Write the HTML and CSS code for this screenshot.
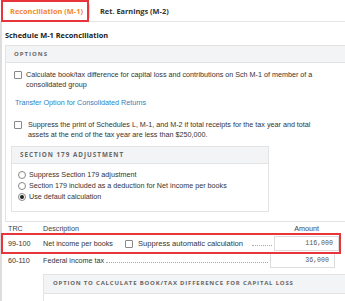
FILE: index.html
```html
<!DOCTYPE html>
<html lang="en">
<head>
  <meta charset="UTF-8" />
  <title>Schedule M-1 Reconciliation</title>
  <link rel="stylesheet" href="styles.css">
</head>
<body>
  <div class="tabs">
    <div class="tab active">Reconciliation (M-1)</div>
    <div class="tab-sep"></div>
    <div class="tab">Ret. Earnings (M-2)</div>
  </div>

  <div class="content">
    <h1>Schedule M-1 Reconciliation</h1>

    <!-- Options panel -->
    <div class="panel options">
      <div class="panel-head">Options</div>
      <div class="panel-body">
        <div class="check-row">
          <span class="box"></span>
          <span>Calculate book/tax difference for capital loss and contributions on Sch M-1 of member of a consolidated group</span>
        </div>
        <a class="link">Transfer Option for Consolidated Returns</a>
        <div class="check-row second">
          <span class="box"></span>
          <span>Suppress the print of Schedules L, M-1, and M-2 if total receipts for the tax year and total assets at the end of the tax year are less than $250,000.</span>
        </div>

        <div class="panel sub">
          <div class="panel-head">Section 179 Adjustment</div>
          <div class="radios">
            <div class="radio-row"><span class="radio"></span>Suppress Section 179 adjustment</div>
            <div class="radio-row"><span class="radio"></span>Section 179 included as a deduction for Net income per books</div>
            <div class="radio-row"><span class="radio on"></span>Use default calculation</div>
          </div>
        </div>
      </div>
    </div>

    <!-- Lines -->
    <div class="grid-head">
      <span class="trc">TRC</span>
      <span class="desc">Description</span>
      <span class="amt">Amount</span>
    </div>
    <div class="line marked">
      <span class="trc">99-100</span>
      <span class="desc">Net income per books</span>
      <span class="box"></span>
      <span class="suppress">Suppress automatic calculation</span>
      <span class="dots short"></span>
      <span class="value">116,000</span>
    </div>
    <div class="line">
      <span class="trc">60-110</span>
      <span class="desc">Federal income tax</span>
      <span class="dots"></span>
      <span class="value">36,000</span>
    </div>

    <div class="panel lower">
      <div class="panel-head">Option to calculate book/tax difference for capital loss</div>
      <div class="panel-body"></div>
    </div>
  </div>
</body>
</html>
```

FILE: styles.css
```css
body {
  margin: 0;
  font-family: "Liberation Sans", Arial, sans-serif;
  font-size: 7.2px;
  color: #333;
  background: #fff;
  overflow: hidden;
}

.tabs {
  display: flex;
  align-items: center;
  height: 21px;
  border-bottom: 1px solid #e6e6e6;
  padding-left: 3px;
}
.tab {
  font-family: "Open Sans", sans-serif;
  font-weight: 700;
  font-size: 7.4px;
  color: #333;
  padding: 0 8px 0 8px;
  line-height: 18px;
}
.tab.active {
  color: #f5872f;
  outline: 2px solid #e8343b;
  outline-offset: 0;
  padding: 0 4px 0 7px;
  margin-right: 2px;
}
.tab-sep {
  width: 1px;
  height: 14px;
  background: #ddd;
  margin-right: 2px;
}

.content {
  border-left: 2px solid #ddd;
  padding-bottom: 20px;
}

h1 {
  font-family: "Open Sans", sans-serif;
  font-size: 7.4px;
  font-weight: 700;
  color: #222;
  margin: 0;
  padding: 8px 0 0 3px;
  height: 15px;
}

.panel {
  border: 1px solid #e3e3e3;
  background: #fff;
}
.panel-head {
  background: #f3f4f6;
  border-bottom: 1px solid #e3e3e3;
  height: 16px;
  line-height: 16px;
  padding-left: 8px;
  font-family: "Open Sans", sans-serif;
  font-weight: 700;
  font-size: 6px;
  letter-spacing: 1px;
  text-transform: uppercase;
  color: #666;
}

.options {
  margin-left: 3px;
  margin-right: -20px;
}
.options .panel-body {
  padding: 7px 0 9px 8px;
  width: 318px;
}

.check-row {
  display: flex;
  align-items: flex-start;
  line-height: 10px;
  margin-right: 4px;
}
.check-row .box {
  margin: 1px 4px 0 0;
}
.check-row.second .box {
  margin-right: 6px;
}
.box {
  flex: none;
  width: 6px;
  height: 6px;
  border: 1px solid #888;
  border-radius: 1px;
  background: #fff;
}

.link {
  display: block;
  color: #2f7fc1;
  margin: 8px 0 12px 1px;
  line-height: 10px;
}

.sub {
  margin: 6px 0 0 -3px;
  width: 256px;
}
.sub .panel-head {
  font-size: 6.3px;
}
.radios {
  padding: 5px 0 9px 6px;
}
.radio-row {
  display: flex;
  align-items: center;
  height: 11px;
}
.radio {
  flex: none;
  width: 6px;
  height: 6px;
  border: 1px solid #888;
  border-radius: 50%;
  margin-right: 3px;
  position: relative;
}
.radio.on::after {
  content: "";
  position: absolute;
  left: 1px;
  top: 1px;
  width: 4px;
  height: 4px;
  border-radius: 50%;
  background: #222;
}

.grid-head,
.line {
  display: flex;
  align-items: center;
  padding-left: 6px;
  width: 327px;
}
.grid-head {
  margin-top: 0;
  height: 12px;
  color: #444;
}
.trc {
  width: 35px;
  flex: none;
}
.grid-head .amt {
  margin-left: auto;
  margin-right: 16px;
}

.line {
  height: 16px;
}
.line.marked {
  outline: 2px solid #e8343b;
  outline-offset: 0;
  margin-left: 1px;
  width: 331px;
  padding-left: 5px;
  height: 17px;
  margin-top: 1px;
}
.line .desc {
  flex: none;
}
.line.marked .box {
  margin-left: 12px;
  margin-right: 5px;
}
.suppress {
  font-size: 7.6px;
}
.dots {
  flex: 1;
  height: 0;
  border-bottom: 1px dotted #aaa;
  margin: 4px 2px 0 2px;
}
.dots.short {
  margin-left: 9px;
}
.value {
  flex: none;
  width: 58px;
  height: 13px;
  line-height: 13px;
  border: 1px solid #ddd;
  text-align: right;
  padding-right: 5px;
  font-family: "Liberation Mono", monospace;
  font-size: 6.6px;
  color: #555;
}

.lower {
  margin: 6px -20px 0 41px;
}
.lower .panel-head {
  height: 18px;
  line-height: 16px;
  padding-left: 9px;
  letter-spacing: 0.8px;
}
.lower .panel-body {
  height: 20px;
}
```
